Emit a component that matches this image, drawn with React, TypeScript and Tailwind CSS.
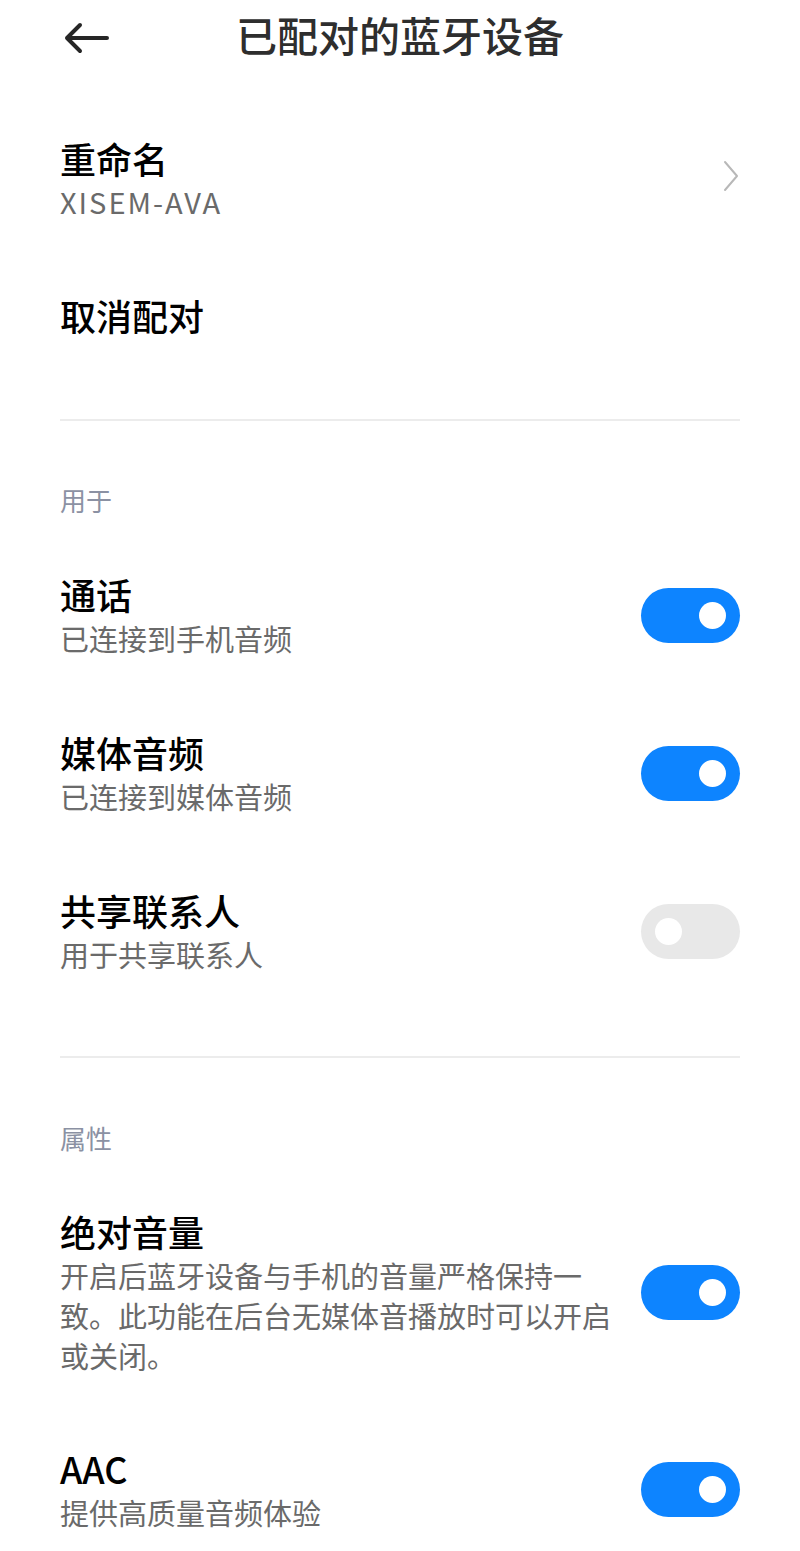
import React from "react";

const font = { fontFamily: '"Noto Sans CJK SC", "Noto Sans", sans-serif' };

function Toggle({ on }: { on: boolean }) {
  return (
    <div
      className={`flex h-[55px] w-[99px] shrink-0 items-center rounded-full ${
        on ? "justify-end bg-[#0d84ff] pr-[14px]" : "justify-start bg-[#e8e8e8] pl-[14px]"
      }`}
    >
      <div className="h-[27px] w-[27px] rounded-full bg-white" />
    </div>
  );
}

function Title({ children }: { children: React.ReactNode }) {
  return <div className="text-[36px] leading-[44px] font-medium text-black">{children}</div>;
}

function Sub({ children }: { children: React.ReactNode }) {
  return <div className="mt-[2px] text-[29px] leading-[40px] text-[#6a6a6a]">{children}</div>;
}

function ToggleRow({ title, sub, on }: { title: string; sub: string; on: boolean }) {
  return (
    <div className="flex h-[158px] items-center justify-between">
      <div>
        <Title>{title}</Title>
        <Sub>{sub}</Sub>
      </div>
      <Toggle on={on} />
    </div>
  );
}

function SectionHeader({ children }: { children: React.ReactNode }) {
  return <div className="pb-[18px] text-[26px] leading-[36px] text-[#8b91a3]">{children}</div>;
}

export default function App() {
  return (
    <div className="min-h-screen w-[800px] bg-white" style={font}>
      <header className="relative flex h-[68px] items-center justify-center">
        <svg
          className="absolute left-[63px] top-[16px]"
          width="48"
          height="44"
          viewBox="0 0 48 44"
          fill="none"
          stroke="#262626"
          strokeWidth="4"
          strokeLinecap="round"
          strokeLinejoin="round"
        >
          <path d="M44 22 H4 M17 9 L4 22 L17 35" />
        </svg>
        <h1 className="text-[41px] leading-[48px] font-medium text-[#2e2e2e]">已配对的蓝牙设备</h1>
      </header>

      <main className="px-[60px]">
        <div className="mt-[30px] flex h-[160px] items-center justify-between">
          <div>
            <Title>重命名</Title>
            <div className="mt-[1px] text-[29px] leading-[40px] tracking-[2px] text-[#6a6a6a]">XISEM-AVA</div>
          </div>
          <svg width="16" height="32" viewBox="0 0 16 32" fill="none" stroke="#b8b8b8" strokeWidth="2" strokeLinecap="round" strokeLinejoin="round" className="mr-[1px] -mt-[4px]">
            <path d="M2 2 L14 16 L2 30" />
          </svg>
        </div>

        <div className="flex h-[114px] items-center">
          <Title>取消配对</Title>
        </div>

        <div className="mt-[47px] h-[2px] bg-[#ececec]" />

        <div className="mt-[61px]">
          <SectionHeader>用于</SectionHeader>
        </div>

        <ToggleRow title="通话" sub="已连接到手机音频" on />
        <ToggleRow title="媒体音频" sub="已连接到媒体音频" on />
        <ToggleRow title="共享联系人" sub="用于共享联系人" on={false} />

        <div className="mt-[46px] h-[2px] bg-[#ececec]" />

        <div className="mt-[62px]">
          <SectionHeader>属性</SectionHeader>
        </div>

        <div className="-mt-[21px] flex h-[278px] items-center justify-between">
          <div>
            <Title>绝对音量</Title>
            <Sub>
              开启后蓝牙设备与手机的音量严格保持一
              <br />
              致。此功能在后台无媒体音播放时可以开启
              <br />
              或关闭。
            </Sub>
          </div>
          <Toggle on />
        </div>

        <div className="flex h-[116px] items-center justify-between">
          <div>
            <Title>AAC</Title>
            <Sub>提供高质量音频体验</Sub>
          </div>
          <Toggle on />
        </div>
      </main>
    </div>
  );
}
